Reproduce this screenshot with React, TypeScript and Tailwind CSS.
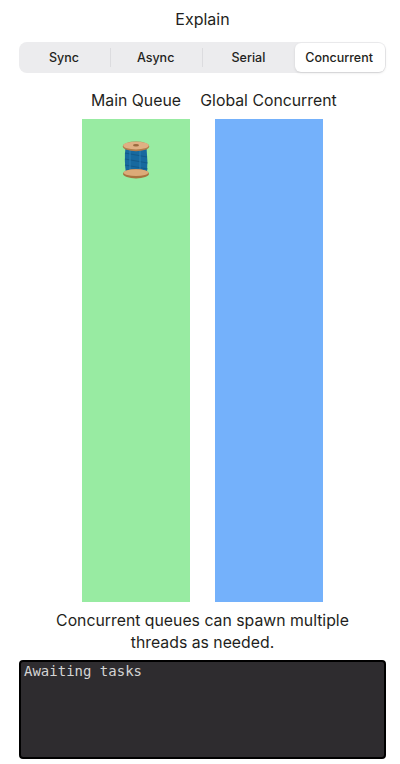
function Spool() {
  return (
    <svg width="28" height="38" viewBox="0 0 28 38" className="block">
      {/* thread */}
      <path d="M3.5 6 H24.5 Q26 20 25 33 H4 Q2 20 3.5 6 Z" fill="#17699f" />
      <path d="M3 12 L25 16 M3 18 L25.5 22 M3 24 L25.5 28 M4.5 29 L23 32" stroke="#135a8a" strokeWidth="1.2" />
      <path d="M8 8 V31 M18 8 V33" stroke="#2a80b4" strokeWidth="2" opacity="0.5" />
      {/* bottom flange */}
      <ellipse cx="14" cy="32.8" rx="13" ry="4.7" fill="#a8733f" />
      <ellipse cx="14" cy="31.6" rx="12.5" ry="3.4" fill="#dcaa78" />
      {/* top flange */}
      <ellipse cx="14" cy="5.4" rx="13.2" ry="4.8" fill="#b07c49" />
      <ellipse cx="14" cy="4.6" rx="12.8" ry="3.9" fill="#dfb083" />
      <ellipse cx="14" cy="4.2" rx="3" ry="1.3" fill="#9a6a3e" />
    </svg>
  );
}

export default function App() {
  return (
    <div className="w-[400px] h-[764px] bg-white pl-[19px] pr-[14px] flex flex-col items-center font-['Inter',sans-serif] text-[#1f1f21] overflow-hidden">
      <h1 className="mt-[9px] h-[21px] text-[16px] leading-[21px] font-normal">Explain</h1>

      {/* SEGMENTED CONTROL */}
      <div className="mt-[12px] w-full h-[31px] bg-[#ececee] rounded-lg grid grid-cols-4 items-center text-[12.5px] font-medium">
        <div className="relative text-center pr-[2px] pt-px">
          Sync
          <span className="absolute right-0 top-0 h-full w-px bg-[#dcdcdf]" />
        </div>
        <div className="relative text-center pr-[2px] pt-px">
          Async
          <span className="absolute right-0 top-0 h-full w-px bg-[#dcdcdf]" />
        </div>
        <div className="text-center pt-px">Serial</div>
        <div className="h-[29px] mr-px ml-px pr-[2px] pt-px bg-white rounded-md flex items-center justify-center shadow-sm">
          Concurrent
        </div>
      </div>

      {/* QUEUES */}
      <div className="mt-[18px] flex gap-[25px]">
        <div className="w-[108px] flex flex-col items-center">
          <span className="h-[20px] text-[15.8px] leading-[20px] whitespace-nowrap">Main Queue</span>
          <div className="mt-[8px] w-[108px] h-[483px] bg-[#98eba2] flex justify-center pt-[22px]">
            <div className="h-[38px] -ml-px">
              <Spool />
            </div>
          </div>
        </div>
        <div className="w-[108px] flex flex-col items-center">
          <span className="h-[20px] -ml-px text-[15.8px] leading-[20px] whitespace-nowrap">Global Concurrent</span>
          <div className="mt-[8px] w-[108px] h-[483px] bg-[#74b1fb]" />
        </div>
      </div>

      <p className="mt-[8px] w-[340px] text-center text-[15.8px] leading-[22px]">
        Concurrent queues can spawn multiple threads as needed.
      </p>

      {/* CONSOLE */}
      <div className="mt-[6px] w-full h-[99px] bg-[#2e2c2f] border-2 border-black rounded-[4px] px-[3px] font-['DejaVu_Sans_Mono',monospace] text-[14px] leading-[18px] text-[#d4d4d4]">
        Awaiting tasks
      </div>
    </div>
  );
}
